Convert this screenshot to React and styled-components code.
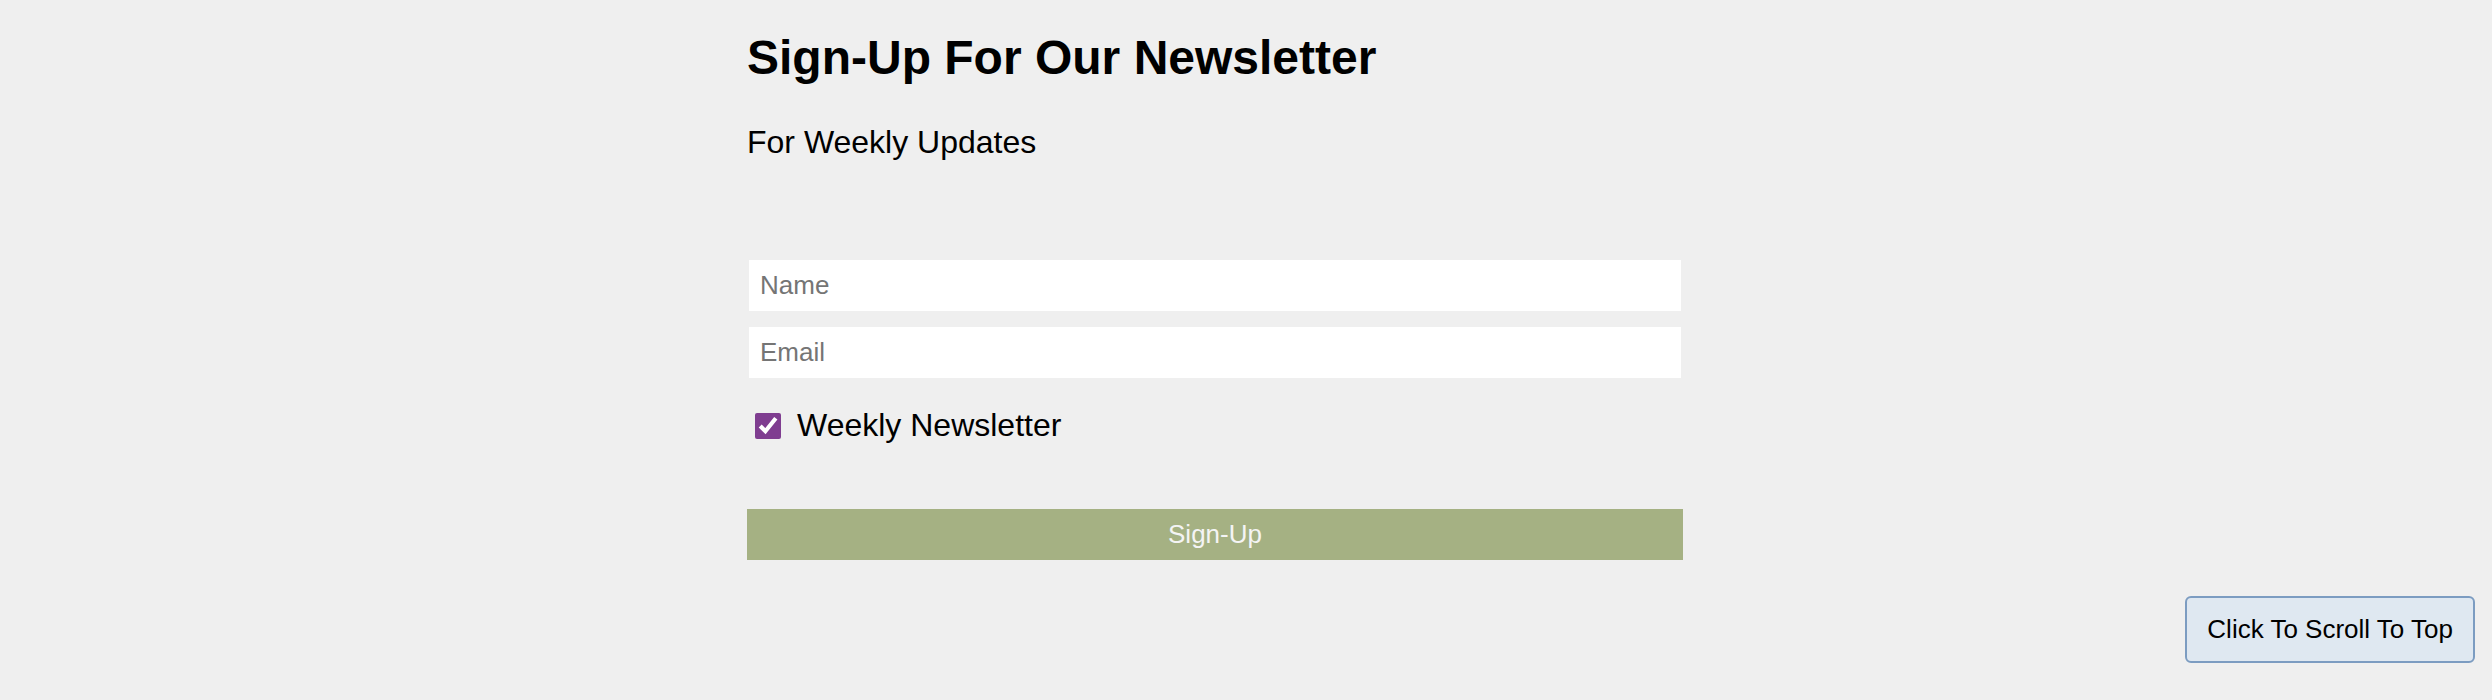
import React, { useState } from 'react';
import styled, { createGlobalStyle } from 'styled-components';

const GlobalStyle = createGlobalStyle`
	html, body {
		margin: 0;
		padding: 0;
		background: #efefef;
	}
	body {
		font-family: 'Liberation Sans', Arial, Helvetica, sans-serif;
		color: #000;
	}
	#root {
		min-height: 700px;
	}
`;

const Page = styled.main`
	padding-left: 747px;
	padding-top: 30px;
	min-height: 700px;
	box-sizing: border-box;
`;

const Signup = styled.section`
	width: 936px;
	display: flex;
	flex-direction: column;
`;

const Title = styled.h1`
	margin: 0;
	font-size: 48px;
	font-weight: 700;
	line-height: 55px;
`;

const Subtitle = styled.p`
	margin: 39px 0 0;
	font-size: 32px;
	line-height: 37px;
`;

const Form = styled.form`
	display: flex;
	flex-direction: column;
	margin-top: 99px;
`;

const Field = styled.input`
	box-sizing: border-box;
	width: calc(100% - 4px);
	height: 51px;
	margin: 0 2px ${(p) => (p.$last ? '0' : '16px')};
	padding: 0 11px;
	border: none;
	outline: none;
	background: #fff;
	font-family: inherit;
	font-size: 26px;
	color: #000;
	&::placeholder {
		color: #757575;
	}
`;

const CheckRow = styled.label`
	display: flex;
	align-items: center;
	gap: 16px;
	margin: 29px 0 0 8px;
	font-size: 32px;
	line-height: 37px;
	cursor: pointer;
`;

const Check = styled.input`
	width: 26px;
	height: 26px;
	margin: 0;
	accent-color: #7f3d90;
`;

const Submit = styled.button`
	margin-top: 65px;
	height: 51px;
	width: 100%;
	border: none;
	background: #a5b183;
	color: #f4f4f4;
	font-family: inherit;
	font-size: 26px;
	cursor: pointer;
`;

const ScrollTop = styled.button`
	position: fixed;
	right: 17px;
	bottom: 37px;
	height: 67px;
	padding: 0 20px;
	border: 2px solid #7c9cc1;
	border-radius: 6px;
	background: #dfe8f1;
	color: #000;
	font-family: inherit;
	font-size: 26px;
	cursor: pointer;
`;

export default function App() {
	const [weekly, setWeekly] = useState(true);

	return (
		<>
			<GlobalStyle />
			<Page>
				<Signup>
					<Title>Sign-Up For Our Newsletter</Title>
					<Subtitle>For Weekly Updates</Subtitle>
					<Form onSubmit={(e) => e.preventDefault()}>
						<Field type='text' placeholder='Name' />
						<Field type='email' placeholder='Email' $last />
						<CheckRow>
							<Check
								type='checkbox'
								checked={weekly}
								onChange={() => setWeekly(!weekly)}
							/>
							Weekly Newsletter
						</CheckRow>
						<Submit type='submit'>Sign-Up</Submit>
					</Form>
				</Signup>
			</Page>
			<ScrollTop onClick={() => window.scrollTo(0, 0)}>
				Click To Scroll To Top
			</ScrollTop>
		</>
	);
}
